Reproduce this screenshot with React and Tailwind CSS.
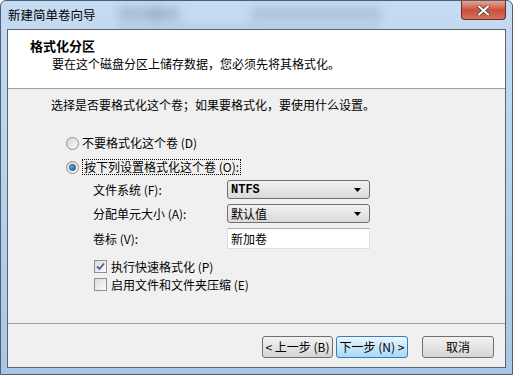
import React from 'react';

const font = { fontFamily: '"Noto Sans CJK SC", "Liberation Sans", sans-serif' };

const Radio = ({ checked }) => (
  <span className="w-[13px] h-[13px] rounded-full border border-[#8e8f8f] bg-gradient-to-br from-[#d8d8d8] to-[#f8f8f8] flex items-center justify-center shrink-0">
    {checked && (
      <span className="w-[7px] h-[7px] rounded-full bg-gradient-to-br from-[#6fc3f5] to-[#125c9b] border border-[#1d4f7e]" />
    )}
  </span>
);

const Checkbox = ({ checked }) => (
  <span className="w-[13px] h-[13px] border border-[#8e8f8f] bg-gradient-to-br from-[#dcdcdc] to-[#fbfbfb] flex items-center justify-center shrink-0">
    {checked && (
      <svg width="9" height="9" viewBox="0 0 9 9">
        <path d="M1 4.5 L3.5 7 L8 1.5" stroke="#4a5f97" strokeWidth="1.8" fill="none" />
      </svg>
    )}
  </span>
);

const Select = ({ value, mono }) => (
  <div className="w-[143px] h-[19px] border border-[#707070] rounded-[3px] bg-gradient-to-b from-[#f2f2f2] to-[#d9d9d9] flex items-center justify-between pl-[3px] pr-[8px]">
    <span className={mono ? 'text-[12px] font-bold' : 'text-[12px]'} style={mono ? { fontFamily: '"Liberation Mono", monospace' } : font}>
      {value}
    </span>
    <svg width="7" height="4" viewBox="0 0 7 4">
      <path d="M0 0 H7 L3.5 4 Z" fill="#000" />
    </svg>
  </div>
);

const Button = ({ children, active }) => (
  <div
    className={
      'h-[22px] rounded-[3px] border flex items-center justify-center text-[12px] ' +
      (active
        ? 'border-[#3c7fb1] bg-gradient-to-b from-[#eaf6fd] to-[#a7d9f5]'
        : 'border-[#707070] bg-gradient-to-b from-[#f2f2f2] to-[#d5d5d5]')
    }
  >
    {children}
  </div>
);

export default function App() {
  return (
    <div
      className="w-[513px] h-[375px] overflow-hidden relative bg-gradient-to-b from-[#c4dbf2] via-[#b9d2ec] to-[#a9c6e4] border border-[#4d5f73] rounded-t-[6px] text-black"
      style={font}
    >
      {/* blurred glass behind title */}
      <div className="absolute left-[118px] top-[6px] w-[40px] h-[14px] bg-[#7f93a8] opacity-40 blur-[4px]" />
      <div className="absolute left-[152px] top-[6px] w-[26px] h-[14px] bg-[#7f93a8] opacity-40 blur-[4px]" />
      <div className="absolute left-[250px] top-[6px] w-[130px] h-[14px] bg-[#7f93a8] opacity-30 blur-[4px]" />
      <div className="absolute left-[118px] top-[24px] w-[260px] h-[6px] bg-[#8ea4b9] opacity-30 blur-[3px]" />

      <div className="relative h-[28px] flex items-start justify-between">
        <div className="pl-[7px] pt-[5px] text-[12.5px] leading-[18px]">新建简单卷向导</div>
        <div className="mr-[6px] w-[45px] h-[19px] rounded-b-[4px] border border-t-0 border-[#6a2a24] bg-gradient-to-b from-[#e8a393] via-[#c9503b] to-[#d8705a] flex items-center justify-center">
          <svg width="13" height="11" viewBox="0 0 13 11">
            <path d="M2 1.5 L11 9.5 M11 1.5 L2 9.5" stroke="#3b3b3b" strokeWidth="3.4" strokeLinecap="square" />
            <path d="M2 1.5 L11 9.5 M11 1.5 L2 9.5" stroke="#fff" strokeWidth="2" strokeLinecap="square" />
          </svg>
        </div>
      </div>

      <div className="relative ml-[6px] w-[499px] h-[339px] border border-[#5a6470] flex flex-col bg-[#f0f0f0]">
        <div className="h-[59px] bg-white border-b border-[#a0a0a0] pl-[22px] pt-[7px]">
          <div className="text-[13px] font-bold leading-[18px]">格式化分区</div>
          <div className="pl-[22px] text-[12px] leading-[17px]">要在这个磁盘分区上储存数据，您必须先将其格式化。</div>
        </div>

        <div className="h-[235px] border-b border-[#a0a0a0] pl-[43px] pt-[8px] text-[12px]">
          <div className="leading-[16px]">选择是否要格式化这个卷；如果要格式化，要使用什么设置。</div>

          <div className="mt-[22px] pl-[15px] flex flex-col gap-[8px]">
            <div className="flex items-center gap-[3px] h-[16px]">
              <Radio />
              <span>不要格式化这个卷 (D)</span>
            </div>
            <div className="flex items-center gap-[3px] h-[16px]">
              <Radio checked />
              <span className="border border-dotted border-black leading-[14px] px-[1px]">按下列设置格式化这个卷 (O):</span>
            </div>
          </div>

          <div className="mt-[5px] pl-[42px] flex flex-col">
            <div className="flex items-center h-[19px]">
              <span className="w-[134px]">文件系统 (F):</span>
              <Select value="NTFS" mono />
            </div>
            <div className="flex items-center h-[19px] mt-[5px]">
              <span className="w-[134px]">分配单元大小 (A):</span>
              <Select value="默认值" />
            </div>
            <div className="flex items-center h-[21px] mt-[5px]">
              <span className="w-[134px]">卷标 (V):</span>
              <div className="w-[143px] h-[21px] bg-white border border-[#dbdfe6] border-t-[#abadb3] pl-[3px] leading-[19px]">新加卷</div>
            </div>
          </div>

          <div className="mt-[11px] pl-[43px] flex flex-col gap-[5px]">
            <div className="flex items-center gap-[4px] h-[13px]">
              <Checkbox checked />
              <span>执行快速格式化 (P)</span>
            </div>
            <div className="flex items-center gap-[4px] h-[13px]">
              <Checkbox />
              <span>启用文件和文件夹压缩 (E)</span>
            </div>
          </div>
        </div>

        <div className="flex-1 flex items-start pt-[12px] pl-[254px]">
          <div className="w-[71px]"><Button>&lt; 上一步 (B)</Button></div>
          <div className="w-[72px] ml-[3px]"><Button active>下一步 (N) &gt;</Button></div>
          <div className="w-[72px] ml-[14px]"><Button>取消</Button></div>
        </div>
      </div>
    </div>
  );
}
